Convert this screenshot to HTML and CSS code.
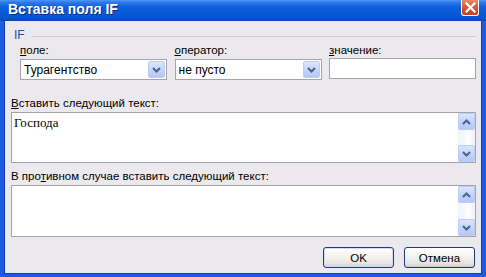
FILE: index.html
```html
<!DOCTYPE html>
<html lang="ru">
<head>
    <meta charset="UTF-8">
    <title>Вставка поля IF</title>
    <link rel="stylesheet" href="styles.css">
</head>
<body>
    <div class="window">
        <div class="titlebar">
            <span class="title">Вставка поля IF</span>
            <span class="close">
                <svg width="11" height="11" viewBox="0 0 11 11"><path d="M1.5 1.5 L9.5 9.5 M9.5 1.5 L1.5 9.5" stroke="#fff" stroke-width="2.2" stroke-linecap="square"/></svg>
            </span>
        </div>
        <div class="client">
            <div class="legend"><span>IF</span><span class="rule"></span></div>
            <div class="fields">
                <div class="field">
                    <div class="label"><u>п</u>оле:</div>
                    <div class="combo">
                        <span class="combo-text">Турагентство</span>
                        <span class="drop"><svg width="9" height="6" viewBox="0 0 9 6"><path d="M1 1 L4.5 4.5 L8 1" fill="none" stroke="#4d6185" stroke-width="2"/></svg></span>
                    </div>
                </div>
                <div class="field">
                    <div class="label"><u>о</u>ператор:</div>
                    <div class="combo">
                        <span class="combo-text">не пусто</span>
                        <span class="drop"><svg width="9" height="6" viewBox="0 0 9 6"><path d="M1 1 L4.5 4.5 L8 1" fill="none" stroke="#4d6185" stroke-width="2"/></svg></span>
                    </div>
                </div>
                <div class="field">
                    <div class="label"><u>з</u>начение:</div>
                    <div class="edit"></div>
                </div>
            </div>

            <div class="label label-wide"><u>В</u>ставить следующий текст:</div>
            <div class="memo">
                <div class="memo-text">Господа</div>
                <div class="scroll">
                    <span class="sbtn"><svg width="9" height="6" viewBox="0 0 9 6"><path d="M1 5 L4.5 1.5 L8 5" fill="none" stroke="#4d6185" stroke-width="2"/></svg></span>
                    <span class="track"></span>
                    <span class="sbtn"><svg width="9" height="6" viewBox="0 0 9 6"><path d="M1 1 L4.5 4.5 L8 1" fill="none" stroke="#4d6185" stroke-width="2"/></svg></span>
                </div>
            </div>

            <div class="label label-wide label-else">В про<u>т</u>ивном случае вставить следующий текст:</div>
            <div class="memo memo-else">
                <div class="memo-text"></div>
                <div class="scroll">
                    <span class="sbtn"><svg width="9" height="6" viewBox="0 0 9 6"><path d="M1 5 L4.5 1.5 L8 5" fill="none" stroke="#4d6185" stroke-width="2"/></svg></span>
                    <span class="track"></span>
                    <span class="sbtn"><svg width="9" height="6" viewBox="0 0 9 6"><path d="M1 1 L4.5 4.5 L8 1" fill="none" stroke="#4d6185" stroke-width="2"/></svg></span>
                </div>
            </div>

            <div class="buttons">
                <button class="btn btn-default">OK</button>
                <button class="btn">Отмена</button>
            </div>
        </div>
    </div>
</body>
</html>
```

FILE: styles.css
```css
body
{
    margin: 0;
    font-family: "Liberation Sans", Arial, sans-serif;
    font-size: 11.5px;
    color: #000;
    background: #ebe9ed;
}
.window
{
    width: 486px;
    height: 277px;
    display: flex;
    flex-direction: column;
}
.titlebar
{
    height: 21px;
    flex: none;
    display: flex;
    justify-content: space-between;
    align-items: flex-start;
    padding: 0 7px 0 8px;
    background: linear-gradient(#4f96f6 0%, #2d78ea 12%, #0d5edc 35%, #0757d6 70%, #0a53c8 90%, #0842b0 100%);
}
.title
{
    color: #fff;
    font-weight: bold;
    font-size: 14px;
    line-height: 19px;
    text-shadow: 1px 1px 0 #0b2a8a;
}
.close
{
    width: 18px;
    height: 16px;
    box-sizing: border-box;
    display: flex;
    align-items: center;
    justify-content: center;
    border: 1px solid #fff;
    border-top: none;
    border-radius: 0 0 3px 3px;
    background: linear-gradient(#e88a6a, #d9552f 50%, #c2421c);
}
.client
{
    flex: 1;
    display: flex;
    flex-direction: column;
    padding: 8px 6px 0 7px;
    border-left: 4px solid #1f5be0;
    border-right: 4px solid #1f5be0;
    border-bottom: 3px solid #1f5be0;
    box-shadow: inset 1px 0 #0c3dbe, inset -1px 0 #0c3dbe, inset 0 -1px #0c3dbe;
}
.legend
{
    display: flex;
    align-items: center;
    gap: 7px;
    height: 13px;
    line-height: 13px;
    padding-left: 3px;
    color: #1c4bc4;
    font-size: 12px;
}
.rule
{
    flex: 1;
    height: 1px;
    margin-top: 1px;
    background: #d0cfd4;
}
.fields
{
    display: flex;
    justify-content: space-between;
    padding-left: 9px;
    margin-top: 2px;
}
.field
{
    width: 147px;
}
.label
{
    height: 13px;
    line-height: 13px;
    white-space: nowrap;
}
.combo
{
    margin-top: 2px;
    height: 21px;
    box-sizing: border-box;
    border: 1px solid #a5a5a8;
    background: #fff;
    padding: 1px;
    display: flex;
    align-items: center;
}
.combo-text
{
    flex: 1;
    padding-left: 2px;
    font-size: 12px;
}
.drop, .sbtn
{
    width: 17px;
    height: 17px;
    box-sizing: border-box;
    display: flex;
    align-items: center;
    justify-content: center;
    border: 1px solid #bccdf1;
    border-radius: 2px;
    background: linear-gradient(#dbe6fd, #c3d5fc 50%, #b4c8f4);
}
.edit
{
    margin-top: 1px;
    height: 21px;
    box-sizing: border-box;
    border: 1px solid #a5a5a8;
    background: #fff;
}
.label-wide
{
    margin-top: 17px;
}
.label-else
{
    margin-top: 7px;
}
.memo
{
    margin-top: 2px;
    height: 51px;
    box-sizing: border-box;
    border: 1px solid #a5a5a8;
    background: #fff;
    display: flex;
}
.memo-else
{
    height: 52px;
}
.memo-text
{
    flex: 1;
    padding: 2px 2px;
    font-family: "Liberation Serif", "Times New Roman", serif;
    font-size: 13px;
    line-height: 15px;
}
.scroll
{
    width: 17px;
    display: flex;
    flex-direction: column;
    background: linear-gradient(90deg, #eef2fd, #fdfdff 60%, #eef2fd);
}
.track
{
    flex: 1;
}
.buttons
{
    display: flex;
    justify-content: flex-end;
    gap: 10px;
    margin-top: 10px;
    padding-right: 1px;
}
.btn
{
    width: 71px;
    height: 21px;
    padding: 0;
    font-family: "Liberation Sans", Arial, sans-serif;
    font-size: 11.5px;
    color: #000;
    border: 1px solid #1b3f7a;
    border-radius: 3px;
    background: linear-gradient(#ffffff, #f5f4f1 40%, #e8e6e0 80%, #d5d1c8);
    box-shadow: inset 0 -1px #cfcac0;
}
.btn-default
{
    box-shadow: inset 0 0 0 1px #cfdcf6, inset 0 -1px #b6c8ee;
}
```
